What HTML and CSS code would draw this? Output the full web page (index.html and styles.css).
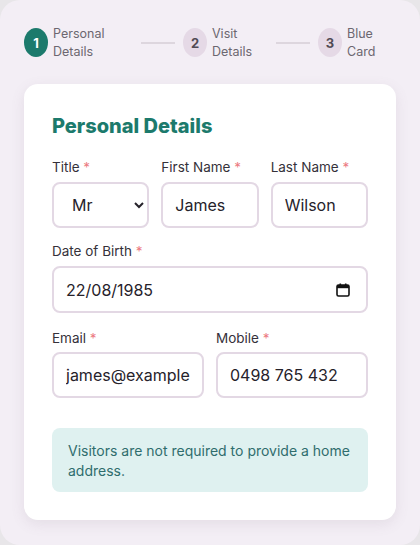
FILE: index.html
```html
<!DOCTYPE html>
<html lang="en">
<head>
<meta charset="utf-8">
<link rel="stylesheet" href="styles.css">
</head>
<body>
<div class="panel">
  <div class="steps">
    <div class="step active step-first">
      <span class="num">1</span>
      <span class="step-label">Personal<br>Details</span>
    </div>
    <span class="connector"></span>
    <div class="step step-mid">
      <span class="num">2</span>
      <span class="step-label">Visit<br>Details</span>
    </div>
    <span class="connector"></span>
    <div class="step">
      <span class="num">3</span>
      <span class="step-label">Blue<br>Card</span>
    </div>
  </div>

  <div class="card">
    <h2 class="card-title">Personal Details</h2>

    <div class="row three">
      <div class="field">
        <label class="label">Title <span class="req">*</span></label>
        <select class="control select">
          <option>Mr</option>
        </select>
      </div>
      <div class="field">
        <label class="label">First Name <span class="req">*</span></label>
        <input class="control" type="text" value="James">
      </div>
      <div class="field">
        <label class="label">Last Name <span class="req">*</span></label>
        <input class="control" type="text" value="Wilson">
      </div>
    </div>

    <div class="row one">
      <div class="field">
        <label class="label">Date of Birth <span class="req">*</span></label>
        <div class="control date">
          <input class="date-input" type="text" value="22/08/1985">
          <svg class="cal" width="14" height="14" viewBox="0 0 14 14" aria-hidden="true">
            <rect x="1" y="2" width="12" height="11" rx="1.5" fill="none" stroke="#111" stroke-width="1.6"/>
            <rect x="1" y="2" width="12" height="3.2" fill="#111"/>
            <rect x="3.5" y="0.5" width="1.6" height="2.5" fill="#111"/>
            <rect x="8.9" y="0.5" width="1.6" height="2.5" fill="#111"/>
          </svg>
        </div>
      </div>
    </div>

    <div class="row two">
      <div class="field">
        <label class="label">Email <span class="req">*</span></label>
        <input class="control" type="text" value="james@example.com">
      </div>
      <div class="field">
        <label class="label">Mobile <span class="req">*</span></label>
        <input class="control" type="text" value="0498 765 432">
      </div>
    </div>

    <div class="note">Visitors are not required to provide a home address.</div>
  </div>
</div>
</body>
</html>
```

FILE: styles.css
```css
* { box-sizing: border-box; }

html, body {
  margin: 0;
  padding: 0;
}

body {
  background: #e8e6e9;
  font-family: Inter, "Noto Sans", sans-serif;
  width: 420px;
  height: 545px;
  overflow: hidden;
}

.panel {
  width: 420px;
  height: 545px;
  background: #f3eef5;
  border-radius: 20px;
  padding: 28px 24px 0 24px;
}

.steps {
  display: flex;
  align-items: center;
  height: 29px;
}

.step {
  display: flex;
  align-items: center;
  gap: 5px;
}

.step-first { width: 109px; }
.step-mid { width: 85px; }

.num {
  width: 24px;
  height: 29px;
  border-radius: 50%;
  background: #e5d9e6;
  color: #514b55;
  font-weight: 700;
  font-size: 13px;
  display: flex;
  align-items: center;
  justify-content: center;
  flex-shrink: 0;
}

.step.active .num {
  background: #1c7a6c;
  color: #ffffff;
}

.step-label {
  font-size: 12.5px;
  line-height: 18px;
  color: #6c6770;
}

.connector {
  height: 2px;
  width: 34px;
  background: #ddd6de;
  margin: 0 8px;
  flex-shrink: 0;
}

.card {
  margin-top: 27px;
  background: #ffffff;
  border-radius: 14px;
  box-shadow: 0 4px 14px rgba(120, 100, 125, 0.12);
  padding: 30px 28px 28px 28px;
}

.card-title {
  margin: 0 0 20px 0;
  font-size: 20px;
  font-weight: 800;
  color: #1c7a6c;
  line-height: 24px;
}

.row {
  display: grid;
  gap: 12px;
}

.row.three { grid-template-columns: 1fr 1fr 1fr; margin-bottom: 14px; }
.row.one { grid-template-columns: 1fr; margin-bottom: 16px; }
.row.two { grid-template-columns: 1fr 1fr; margin-bottom: 30px; }

.field {
  display: flex;
  flex-direction: column;
  min-width: 0;
}

.label {
  font-size: 13.5px;
  color: #35313a;
  line-height: 18px;
  margin-bottom: 6px;
}

.row.two .label { margin-bottom: 5px; }

.req { color: #ec7b82; }

.control {
  height: 46px;
  border: 2px solid #e3d8e4;
  border-radius: 8px;
  background: #ffffff;
  font-family: Inter, "Noto Sans", sans-serif;
  font-size: 16px;
  color: #26222a;
  padding: 0 12px;
  width: 100%;
  min-width: 0;
  outline: none;
}

.select {
  padding: 0 8px 0 14px;
}

.date {
  display: flex;
  align-items: center;
  height: 47px;
  padding: 0 16px 0 12px;
}

.date-input {
  flex: 1;
  min-width: 0;
  border: none;
  outline: none;
  padding: 0;
  font-family: Inter, "Noto Sans", sans-serif;
  font-size: 16px;
  color: #26222a;
  background: transparent;
}

.cal { flex-shrink: 0; }

.note {
  background: #dff1f0;
  border-radius: 8px;
  padding: 13px 16px 11px 16px;
  font-size: 14px;
  line-height: 20px;
  color: #2f6d6d;
}
```
